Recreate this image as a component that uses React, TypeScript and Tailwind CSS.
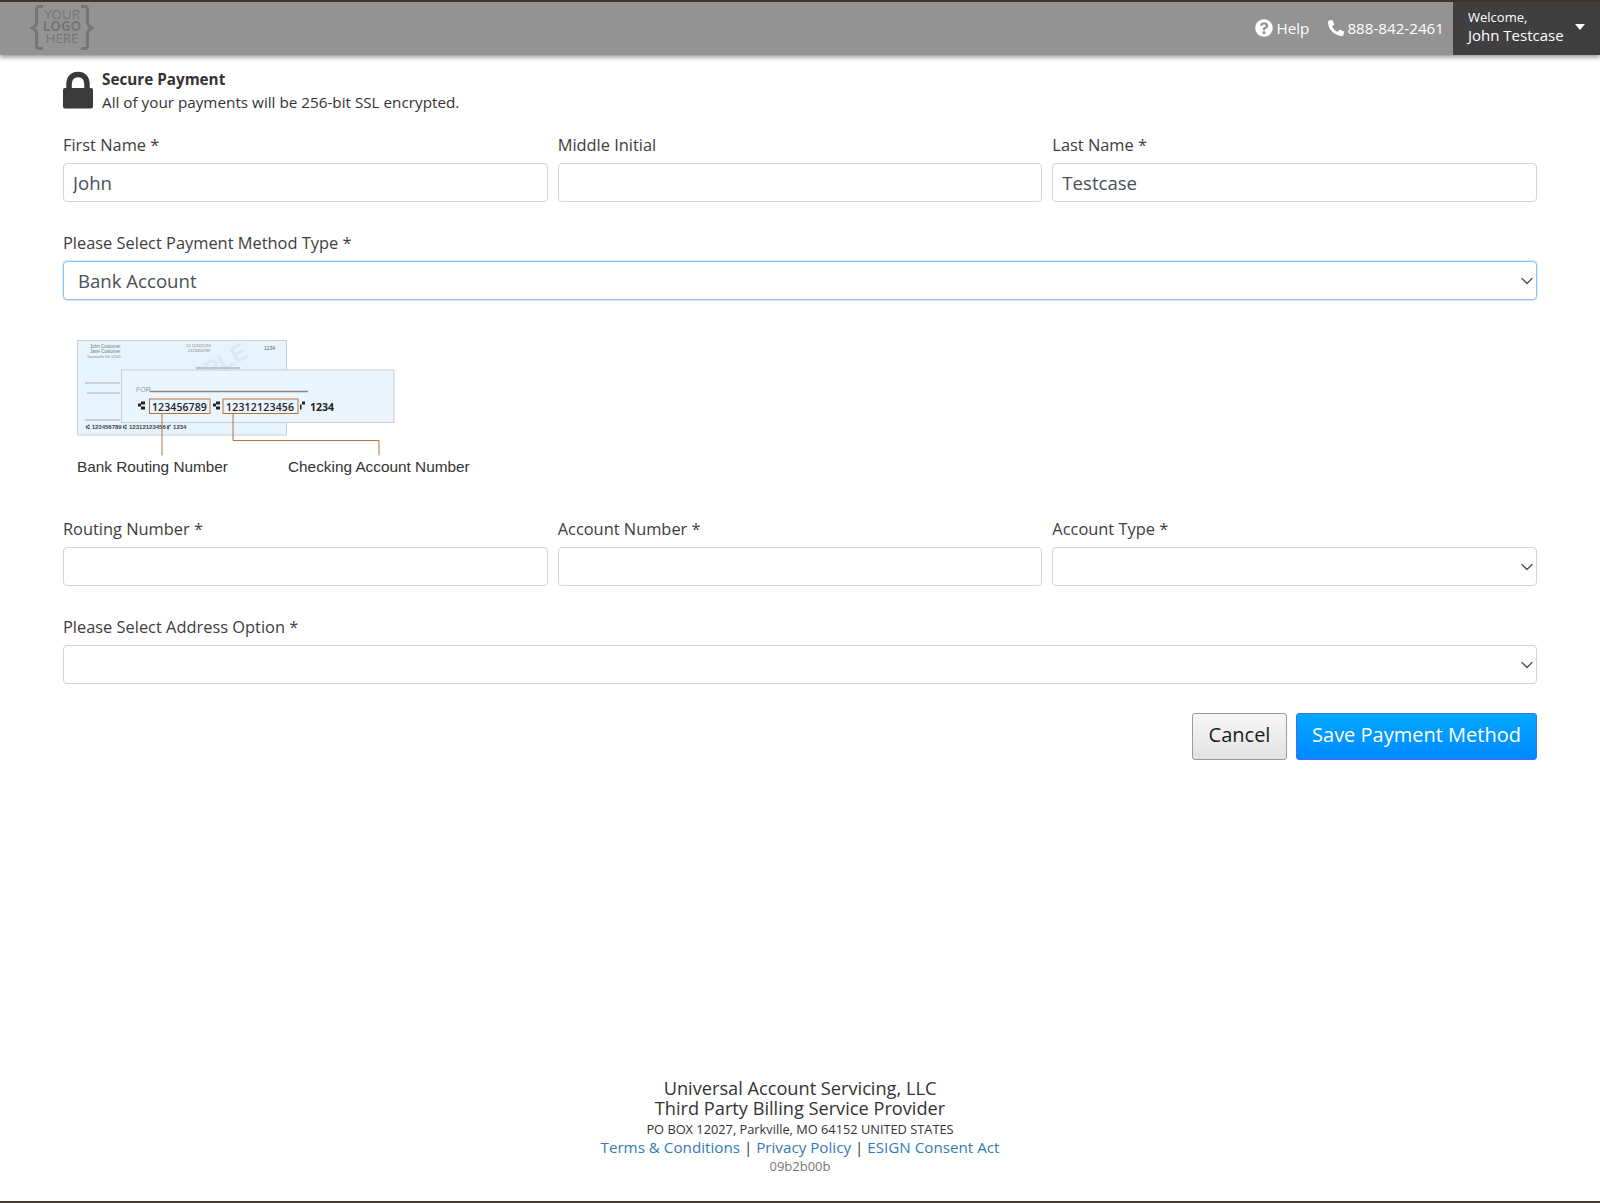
import { ChevronDown } from "lucide-react";
import { FaPhoneAlt, FaQuestionCircle } from "react-icons/fa";

const inputCls =
  "w-full h-[39px] rounded-[4px] border border-[#ced4da] bg-white px-[9px] text-[18.6px] text-[#495057] outline-none";

function Field({ label, value }: { label: string; value?: string }) {
  return (
    <div className="flex-1 min-w-0">
      <label className="block h-[32px] text-[16.4px] leading-[28px] text-[#3d3d3d]">{label}</label>
      <input readOnly value={value ?? ""} className={inputCls} />
    </div>
  );
}

function SelectField({ label, value, focus }: { label: string; value?: string; focus?: boolean }) {
  return (
    <div className="flex-1 min-w-0">
      <label className="block h-[32px] text-[16.4px] leading-[28px] text-[#3d3d3d]">{label}</label>
      <div className="relative">
        <select
          defaultValue={value ?? ""}
          className={
            focus
              ? "w-full h-[39px] appearance-none rounded-[4px] border border-[#8fc3fb] shadow-[0_0_0_1px_#d5e9ff] bg-white px-[14px] text-[18.6px] text-[#495057] outline-none"
              : "w-full h-[39px] appearance-none rounded-[4px] border border-[#ced4da] bg-white px-[14px] text-[18.6px] text-[#495057] outline-none"
          }
        >
          <option value={value ?? ""}>{value ?? ""}</option>
        </select>
        <ChevronDown size={20} strokeWidth={1.5} className="absolute right-0 top-[10px] text-[#4a4f55]" />
      </div>
    </div>
  );
}

function Logo() {
  return (
    <svg width="64" height="46" viewBox="0 0 64 46" className="text-[#767676]">
      <path
        d="M13 1.5H9.500Q6.500 1.500 6.500 4.500V18Q6.500 21 2 23Q6.500 25 6.500 28V40.500Q6.500 43.500 9.500 43.500H13"
        fill="none"
        stroke="currentColor"
        strokeWidth="3"
      />
      <path
        d="M51 1.500H54.500Q57.500 1.500 57.500 4.500V18Q57.500 21 62 23Q57.500 25 57.500 28V40.500Q57.500 43.500 54.500 43.500H51"
        fill="none"
        stroke="currentColor"
        strokeWidth="3"
      />
      <text x="32" y="14" textAnchor="middle" fontSize="13.300" fill="currentColor" fontFamily="Open Sans">YOUR</text>
      <text x="32" y="26" textAnchor="middle" fontSize="13.300" fontWeight="700" fill="currentColor" fontFamily="Open Sans">LOGO</text>
      <text x="32" y="38" textAnchor="middle" fontSize="13.300" fill="currentColor" fontFamily="Open Sans">HERE</text>
    </svg>
  );
}

function Lock() {
  return (
    <svg width="30" height="38" viewBox="0 0 30 38" className="shrink-0 text-[#3a3a3a]">
      <path d="M6 18V13.500C6 7 9.500 3.500 15 3.500S24 7 24 13.500V18" fill="none" stroke="currentColor" strokeWidth="5.500" />
      <rect x="0" y="17" width="30" height="20.500" rx="2" fill="currentColor" />
    </svg>
  );
}

function CheckPicture() {
  return (
    <svg width="420" height="160" viewBox="0 0 420 160" fontFamily="Liberation Sans">
      <rect x="17.500" y="14.500" width="209" height="94.500" fill="#e8f4fd" stroke="#c9ced3" />
      <text x="103" y="80" fontSize="24" fontWeight="700" fill="#d8eafa" transform="rotate(-30 103 80)">SAMPLE</text>
      <text x="30" y="22" fontSize="4.500" fill="#777">John Customer</text>
      <text x="30" y="27" fontSize="4.500" fill="#777">Jane Customer</text>
      <text x="27" y="32" fontSize="3.500" fill="#888">Gainesville US 12345</text>
      <text x="126" y="21" fontSize="4" fill="#888">12-1234/1234</text>
      <text x="128" y="26" fontSize="4" fill="#888">0123456789</text>
      <text x="204" y="24" fontSize="5" fill="#666">1234</text>
      <path d="M136 42H180" stroke="#999" strokeWidth="1" />
      <path d="M25 57H60M27 67H60M25 94H60" stroke="#aaa" strokeWidth="1" />
      <text x="26" y="103" fontSize="6" fontWeight="700" fill="#444">⑆ 123456789 ⑆ 12312123456 ⑈ 1234</text>
      <g transform="translate(0,-2)">
        <rect x="61.500" y="46" width="272.500" height="52.500" fill="#eaf5fe" stroke="#c9ced3" />
        <text x="76" y="67.500" fontSize="7" fill="#999">FOR</text>
        <path d="M90 67.500H248" stroke="#888" strokeWidth="1.500" />
        <rect x="78" y="79.500" width="3" height="3" fill="#222" />
        <rect x="81" y="77.500" width="4" height="3" fill="#222" />
        <rect x="81" y="82.500" width="4" height="3" fill="#222" />
        <rect x="153" y="79.500" width="3" height="3" fill="#222" />
        <rect x="156" y="77.500" width="4" height="3" fill="#222" />
        <rect x="156" y="82.500" width="4" height="3" fill="#222" />
        <rect x="240" y="80.500" width="1.500" height="5" fill="#222" />
        <rect x="242" y="77.500" width="3" height="3" fill="#222" />
        <rect x="89.500" y="75" width="60.500" height="14.500" fill="none" stroke="#b5723f" strokeWidth="1" />
        <rect x="163" y="75" width="75" height="14.500" fill="none" stroke="#b5723f" strokeWidth="1" />
        <text x="92" y="86.500" fontSize="10.500" fontFamily="Open Sans" fontWeight="600" fill="#222" letterSpacing="0.100">123456789</text>
        <text x="166" y="86.500" fontSize="10.500" fontFamily="Open Sans" fontWeight="600" fill="#222" letterSpacing="0.200">12312123456</text>
        <text x="250" y="86.500" fontSize="10.500" fontFamily="Open Sans" fontWeight="700" fill="#222">1234</text>
        <path d="M102 89.500V131.500M173 89.500V116.500H319V131.500" fill="none" stroke="#b5723f" strokeWidth="1" />
      </g>
      <text x="17" y="145.500" fontSize="15.350" fill="#333">Bank Routing Number</text>
      <text x="228" y="145.500" fontSize="15.350" fill="#333">Checking Account Number</text>
    </svg>
  );
}

export default function App() {
  return (
    <div className="flex min-h-[1203px] flex-col bg-white font-['Open_Sans',sans-serif] border-b-2 border-[#4a3a2e]">
      <header className="flex h-[55px] items-stretch border-t-2 border-[#3f332b] bg-[#939393] shadow-[0_2px_5px_rgba(0,0,0,0.45)]">
        <div className="pl-[30px] pt-[3px]">
          <Logo />
        </div>
        <div className="ml-auto flex items-center gap-[19px] pr-[9px] text-[15.2px] text-white">
          <a className="flex items-center gap-[4px]">
            <FaQuestionCircle size={18} />
            Help
          </a>
          <a className="flex items-center gap-[3px]">
            <FaPhoneAlt size={16} />
            888-842-2461
          </a>
        </div>
        <div className="relative w-[147px] bg-[#3f3f3f] pl-[15px] pt-[6px] text-white">
          <div className="text-[13px] leading-[18px]">Welcome,</div>
          <div className="text-[15px] leading-[18px]">John Testcase</div>
          <span className="absolute right-[15px] top-[22px] h-0 w-0 border-x-[5.5px] border-t-[6px] border-x-transparent border-t-white" />
        </div>
      </header>

      <main className="px-[63px]">
        <div className="mt-[16px] flex items-start gap-[9px]">
          <Lock />
          <div className="-mt-[3px] text-[15.25px] leading-[23px] text-[#333]">
            <div className="font-bold">Secure Payment</div>
            <div>All of your payments will be 256-bit SSL encrypted.</div>
          </div>
        </div>

        <div className="mt-[17px] flex gap-[10px]">
          <Field label="First Name *" value="John" />
          <Field label="Middle Initial" />
          <Field label="Last Name *" value="Testcase" />
        </div>

        <div className="mt-[27px] flex">
          <SelectField label="Please Select Payment Method Type *" value="Bank Account" focus />
        </div>

        <div className="-ml-[3px] mt-[26px]">
          <CheckPicture />
        </div>

        <div className="mt-[29px] flex gap-[10px]">
          <Field label="Routing Number *" />
          <Field label="Account Number *" />
          <SelectField label="Account Type *" />
        </div>

        <div className="mt-[27px] flex">
          <SelectField label="Please Select Address Option *" />
        </div>

        <div className="mt-[29px] flex justify-end gap-[9px]">
          <button className="h-[47px] w-[95px] rounded-[3px] border border-[#9a9a9a] bg-gradient-to-b from-[#f7f7f7] to-[#e2e2e2] pb-[3px] text-[20px] text-[#1c1c1c]">
            Cancel
          </button>
          <button className="h-[47px] w-[241px] rounded-[3px] border border-[#3f6ff0] bg-gradient-to-b from-[#00a8ff] to-[#0088ff] pb-[3px] text-[20px] text-white">
            Save Payment Method
          </button>
        </div>
      </main>

      <footer className="mt-auto pb-[26px] text-center text-[#333]">
        <div className="text-[18.2px] leading-[20px]">Universal Account Servicing, LLC</div>
        <div className="text-[18.2px] leading-[20px]">Third Party Billing Service Provider</div>
        <div className="mt-[2px] text-[12.8px] leading-[18px]">PO BOX 12027, Parkville, MO 64152 UNITED STATES</div>
        <div className="text-[15.2px] leading-[18px]">
          <a className="text-[#337ab7]">Terms &amp; Conditions</a> | <a className="text-[#337ab7]">Privacy Policy</a> |{" "}
          <a className="text-[#337ab7]">ESIGN Consent Act</a>
        </div>
        <div className="mt-[1px] text-[13px] leading-[18px] text-[#777]">09b2b00b</div>
      </footer>
    </div>
  );
}
